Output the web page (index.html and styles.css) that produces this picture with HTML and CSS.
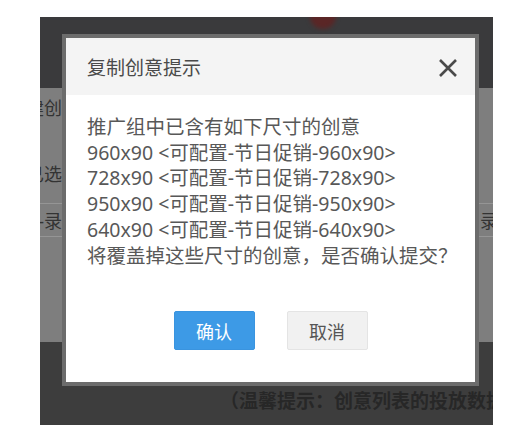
FILE: index.html
```html
<!DOCTYPE html>
<html lang="zh-CN">
<head>
  <meta charset="UTF-8">
  <title>复制创意提示</title>
  <link rel="stylesheet" href="styles.css">
</head>
<body>
<div class="screen">
  <div class="topbar">
    <span class="avatar"></span>
  </div>
  <div class="band">
    <div class="side side-left">
      <div class="cell cell-first"><span>新建创</span></div>
      <div class="cell cell-second"><span>已选</span></div>
      <div class="cell cell-input"><span>销-录</span></div>
    </div>
    <div class="band-fill"></div>
    <div class="side side-right">
      <div class="cell cell-first"></div>
      <div class="cell cell-second"></div>
      <div class="cell cell-input"><span>录入</span></div>
    </div>
  </div>
  <div class="footer">
    <p class="tip">（温馨提示：创意列表的投放数据</p>
  </div>

  <div class="dialog">
    <div class="dialog-head">
      <h3 class="dialog-title">复制创意提示</h3>
      <svg class="dialog-close" width="20" height="20" viewBox="0 0 20 20">
        <path d="M2 2 L18 18 M18 2 L2 18" stroke="#4a4a4a" stroke-width="2.6" fill="none"/>
      </svg>
    </div>
    <div class="dialog-body">
      <p>推广组中已含有如下尺寸的创意</p>
      <p>960x90 &lt;可配置-节日促销-960x90&gt;</p>
      <p>728x90 &lt;可配置-节日促销-728x90&gt;</p>
      <p>950x90 &lt;可配置-节日促销-950x90&gt;</p>
      <p>640x90 &lt;可配置-节日促销-640x90&gt;</p>
      <p>将覆盖掉这些尺寸的创意，是否确认提交？</p>
    </div>
    <div class="dialog-actions">
      <button class="btn btn-primary">确认</button>
      <button class="btn btn-default">取消</button>
    </div>
  </div>
</div>
</body>
</html>
```

FILE: styles.css
```css
body {
  margin: 0;
  background: #fff;
  font-family: "Noto Sans", "Noto Sans CJK SC", sans-serif;
}

.screen {
  position: relative;
  width: 453px;
  height: 408px;
  margin: 17px 0 0 40px;
  background: #3c3c3e;
  overflow: hidden;
}

.topbar {
  display: flow-root;
  height: 71px;
  background: #3a3a3c;
  padding-left: 270px;
  box-sizing: border-box;
}

.avatar {
  display: block;
  width: 26px;
  height: 26px;
  margin-top: -14px;
  border-radius: 50%;
  background: #5a2626;
  filter: blur(2px);
}

.band {
  display: flex;
  height: 254px;
  background: #7e7e7e;
}

.band-fill {
  flex: 1;
}

.side {
  display: flex;
  flex-direction: column;
  overflow: hidden;
}

.side-left {
  width: 24px;
}

.side-right {
  width: 15px;
}

.cell {
  display: flex;
  align-items: center;
  white-space: nowrap;
  font-size: 18px;
  color: #333;
}

.side-left .cell {
  justify-content: flex-end;
  padding-right: 2px;
}

.cell-first {
  height: 38px;
}

.cell-second {
  height: 77px;
  padding-top: 16px;
  box-sizing: border-box;
}

.cell-input {
  height: 34px;
  border-top: 1px solid #959595;
  border-bottom: 1px solid #959595;
  box-sizing: border-box;
}

.side-right .cell-input {
  padding-left: 2px;
}

.footer {
  height: 83px;
  background: #3d3d3d;
  padding: 48px 0 0 180px;
  box-sizing: border-box;
  overflow: hidden;
}

.tip {
  margin: 0;
  white-space: nowrap;
  font-size: 19px;
  line-height: 22px;
  font-weight: bold;
  color: #272727;
}

/* modal */
.dialog {
  position: absolute;
  left: 22px;
  top: 17px;
  width: 417px;
  box-sizing: border-box;
  border: 4px solid #6c6c6c;
  background: #fff;
  color: #585858;
}

.dialog-head {
  display: flex;
  align-items: center;
  justify-content: space-between;
  height: 57px;
  padding: 0 17px 0 21px;
  background: #f4f4f4;
}

.dialog-title {
  margin: 0;
  font-size: 19px;
  font-weight: normal;
  color: #4a4a4a;
}

.dialog-close {
  margin-top: 3px;
}

.dialog-body {
  padding: 19px 21px 0;
  font-size: 19.5px;
  line-height: 25.7px;
}

.dialog-body p {
  margin: 0;
  white-space: nowrap;
}

.dialog-actions {
  display: flex;
  justify-content: center;
  gap: 32px;
  margin-top: 43px;
  padding-bottom: 32px;
}

.btn {
  width: 81px;
  height: 39px;
  border-radius: 2px;
  font-family: "Noto Sans CJK SC", sans-serif;
  font-size: 18px;
  padding: 0;
}

.btn-primary {
  background: #3d9ae6;
  border: 1px solid #3a94df;
  color: #fff;
}

.btn-default {
  background: #f1f1f1;
  border: 1px solid #e4e4e4;
  color: #555;
}
```
